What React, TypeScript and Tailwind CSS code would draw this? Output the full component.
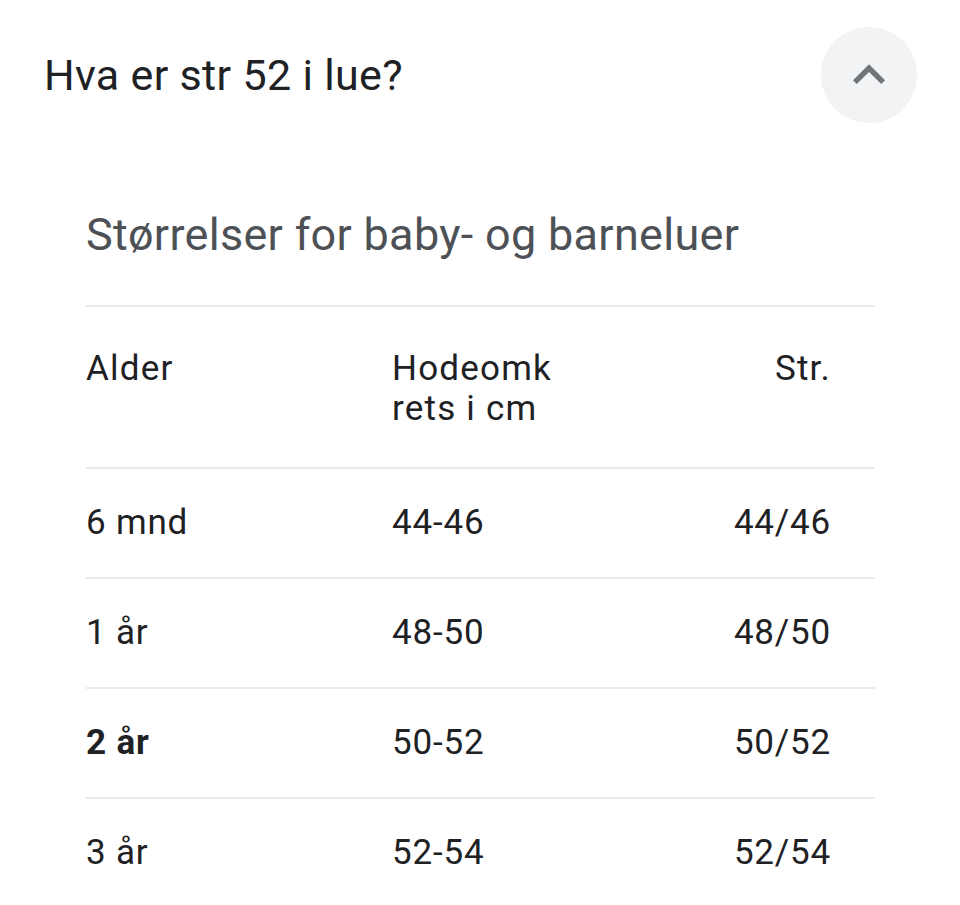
const rows = [
  { age: "6 mnd", cm: "44-46", size: "44/46" },
  { age: "1 år", cm: "48-50", size: "48/50" },
  { age: "2 år", cm: "50-52", size: "50/52", bold: true },
  { age: "3 år", cm: "52-54", size: "52/54" },
];

export default function App() {
  return (
    <div
      className="w-[960px] h-[905px] bg-white overflow-hidden text-[#202124]"
      style={{ fontFamily: "Roboto, 'Liberation Sans', sans-serif" }}
    >
      {/* QUESTION HEADER */}
      <div className="flex items-center justify-between pl-[44px] pr-[43px] pt-[27px]">
        <h1 className="text-[43px] leading-[96px] font-normal tracking-[0.33px]">
          Hva er str 52 i lue?
        </h1>
        <button className="w-[96px] h-[96px] rounded-full bg-[#f1f3f4] flex items-center justify-center">
          <svg width="64" height="64" viewBox="0 0 24 24" className="fill-[#70757a]">
            <path d="M12 8l-6 6 1.41 1.41L12 10.83l4.59 4.58L18 14z" />
          </svg>
        </button>
      </div>

      {/* ANSWER */}
      <div className="pl-[86px] pr-[85px] pt-[88px]">
        <h2 className="text-[45px] leading-[48px] tracking-[0.3px] text-[#4d5156] pb-[46px]">
          Størrelser for baby- og barneluer
        </h2>

        <div className="border-t-2 border-[#e8eaed]">
          <div className="grid grid-cols-[306px_1fr_auto] h-[162px] border-b-2 border-[#e8eaed] text-[35px] leading-[40px] tracking-[1.2px] pr-[44px]">
            <div className="pt-[42px]">Alder</div>
            <div className="pt-[42px]">
              Hodeomk
              <br />
              rets i cm
            </div>
            <div className="pt-[42px] text-right">Str.</div>
          </div>

          {rows.map((r) => (
            <div
              key={r.age}
              className="grid grid-cols-[306px_1fr_auto] items-center h-[110px] border-b-2 border-[#e8eaed] text-[35px] leading-[40px] tracking-[0.8px] pr-[44px]"
            >
              <div className={r.bold ? "font-bold" : ""}>{r.age}</div>
              <div>{r.cm}</div>
              <div className="text-right">{r.size}</div>
            </div>
          ))}
        </div>
      </div>
    </div>
  );
}
